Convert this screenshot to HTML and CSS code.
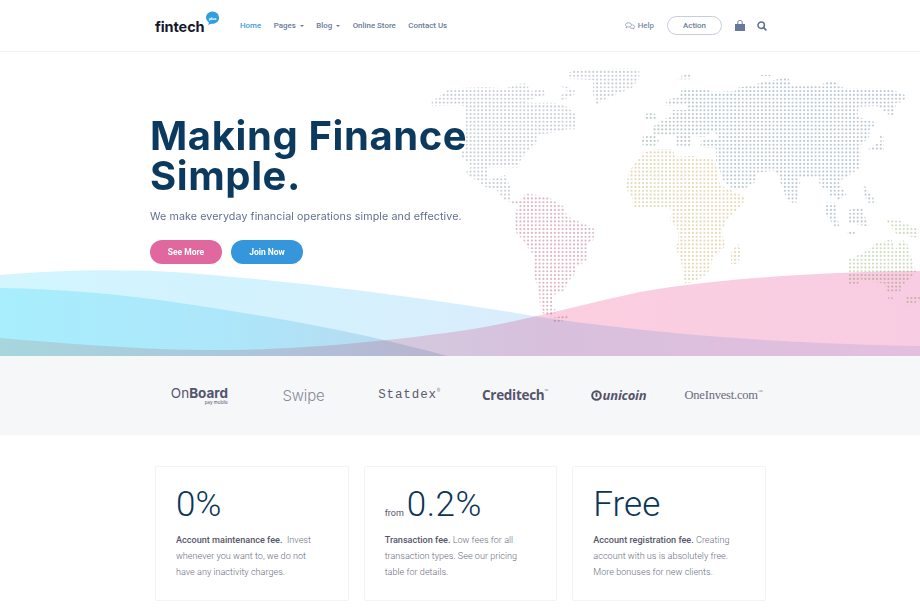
FILE: index.html
```html
<!DOCTYPE html>
<html lang="en">
<head>
<meta charset="utf-8">
<title>Fintech</title>
<link rel="stylesheet" href="styles.css">
</head>
<body>
<header class="header">
  <a class="logo">fintech<svg class="logo-bubble" width="15" height="14" viewBox="0 0 15 14"><path d="M7.5 0.5a6.6 6.2 0 0 1 6.6 6.2c0 3.4-3 6-6.6 6-1.2 0-2.6 .6-4.4 1.1 .6-1 .8-1.800 .6-2.500A6 6 0 0 1 .9 6.700 6.600 6.200 0 0 1 7.500 .5z" fill="#2f9fe0"/><text x="7.500" y="8.500" class="logo-bubble-text">plus</text></svg></a>
  <nav class="nav">
    <a class="nav-link is-active">Home</a>
    <a class="nav-link has-caret">Pages</a>
    <a class="nav-link has-caret">Blog</a>
    <a class="nav-link">Online Store</a>
    <a class="nav-link">Contact Us</a>
  </nav>
  <div class="tools">
    <a class="help"><svg width="10" height="8" viewBox="0 0 10 8"><path d="M3.500 .8c1.700 0 3 .9 3 2.100S5.200 5 3.500 5c-.4 0-.7 0-1-.1L1.200 5.600l.3-1.200C.9 4 .5 3.500 .5 2.900 .5 1.700 1.800 .8 3.500 .8z" fill="none" stroke="#8e9ab3" stroke-width=".9"/><path d="M7.400 2.800c1.200.2 2.100.9 2.100 1.800 0 .5-.3 1-.8 1.300l.2 1-1.100-.6c-1 .2-2.300-.1-2.900-.9" fill="none" stroke="#8e9ab3" stroke-width=".9"/></svg>Help</a>
    <a class="action">Action</a>
    <svg class="bag" width="10" height="11" viewBox="0 0 10 11"><path d="M0 4h10v7H0z" fill="#67789c"/><path d="M2.800 4.500V2.400C2.800 1.100 3.800.4 5 .4s2.200.7 2.200 2v2.100" fill="none" stroke="#67789c" stroke-width="1"/></svg>
    <svg class="search" width="10" height="10" viewBox="0 0 10 10"><circle cx="4.200" cy="4.200" r="3.200" fill="none" stroke="#5d6f94" stroke-width="1.500"/><path d="M6.600 6.600 9.400 9.400" stroke="#5d6f94" stroke-width="1.600"/></svg>
  </div>
</header>

<section class="hero">
  <svg class="hero-art" width="920" height="304" viewBox="0 52 920 304" aria-hidden="true">
    <defs>
      <g id="dot-row" fill="#fff">
        <circle cx="1.920" cy="0" r="1.100"/><circle cx="5.750" cy="0" r="1.100"/><circle cx="9.580" cy="0" r="1.100"/><circle cx="13.420" cy="0" r="1.100"/><circle cx="17.250" cy="0" r="1.100"/><circle cx="21.080" cy="0" r="1.100"/>
      </g>
      <pattern id="dot" width="23" height="23" x="1" y="1" patternUnits="userSpaceOnUse">
        <use href="#dot-row" y="1.920"/><use href="#dot-row" y="5.750"/><use href="#dot-row" y="9.580"/><use href="#dot-row" y="13.420"/><use href="#dot-row" y="17.250"/><use href="#dot-row" y="21.080"/>
      </pattern>
      <mask id="dots" maskUnits="userSpaceOnUse" x="0" y="52" width="920" height="304"><rect x="0" y="52" width="920" height="304" fill="url(#dot)"/></mask>
      <linearGradient id="asia" gradientUnits="userSpaceOnUse" x1="60" y1="0" x2="500" y2="0"><stop offset="0" stop-color="#bccdc9"/><stop offset="1" stop-color="#bccad8"/></linearGradient>
      <linearGradient id="w1" gradientUnits="userSpaceOnUse" x1="0" y1="0" x2="920" y2="0"><stop offset="0" stop-color="#d3f5fe"/><stop offset=".25" stop-color="#d2f3fe"/><stop offset=".55" stop-color="#daedfd"/><stop offset="1" stop-color="#eaeefa"/></linearGradient>
      <linearGradient id="w2" gradientUnits="userSpaceOnUse" x1="0" y1="0" x2="460" y2="0"><stop offset="0" stop-color="#a8eefd"/><stop offset=".5" stop-color="#ade6fa"/><stop offset="1" stop-color="#bdd6ec"/></linearGradient>
      <linearGradient id="w3" gradientUnits="userSpaceOnUse" x1="0" y1="0" x2="920" y2="0"><stop offset="0" stop-color="#fee6df"/><stop offset=".4" stop-color="#fcd8e0"/><stop offset=".6" stop-color="#fbcfdf"/><stop offset="1" stop-color="#f8cde3"/></linearGradient>
    </defs>
    <g mask="url(#dots)">
      <g transform="translate(430 60) scale(.3333)" fill="#ccd0d8">
        <polygon points="5,125 60,85 160,82 230,85 260,72 290,70 300,95 340,85 345,105 310,115 285,128 360,128 372,128 412,140 437,165 437,208 410,208 385,216 320,225 320,250 295,272 272,300 265,322 175,322 175,360 225,345 245,390 190,390 160,378 130,355 105,340 125,318 88,285 108,260 108,140 85,135 5,138"/>
        <polygon points="380,72 435,88 432,105 395,122 390,105 415,100 405,85"/>
        <polygon points="415,40 440,26 490,28 560,26 628,26 628,55 605,85 560,102 512,125 497,138 488,95 490,60 415,56"/>
      </g>
      <polygon points="490,181 503,183 510,190 510,202 504,200" fill="#ccd0d8"/>
      <g transform="translate(500 180) scale(.3333)" fill="#dfb6c3">
        <polygon points="78,40 145,52 190,78 202,110 238,125 282,145 282,178 262,190 260,242 228,260 228,278 208,300 192,332 158,345 158,380 168,392 154,410 124,398 114,322 100,282 100,225 70,182 44,152 44,100 60,72 34,72 36,62 60,60"/>
        <polygon points="155,415 205,402 205,412 182,425 158,425"/>
      </g>
      <polygon points="640,157 643,153 655,149 673,149 675,157 692,156 715,160 720,185 735,192 746,198 740,208 733,213 727,220 722,230 725,247 713,257 710,270 702,278 685,284 682,268 680,257 675,248 678,243 678,230 670,220 672,210 663,207 633,207 632,197 625,187 630,170" fill="#e4d9ba"/>
      <polygon points="738,243 741,252 738,264 731,264 731,253" fill="#e4d9ba"/>
      <g transform="translate(620 60) scale(.3333)" fill="url(#asia)">
        <polygon points="138,120 180,110 185,84 262,84 275,96 345,94 350,84 400,74 440,64 505,52 512,74 600,74 640,60 670,84 800,84 838,98 862,108 848,127 800,132 828,135 818,172 790,152 770,138 716,140 712,170 772,188 748,210 748,232 722,255 722,322 682,350 640,372 662,402 632,412 616,372 590,350 540,352 518,400 522,422 495,392 480,352 460,332 410,338 408,365 372,388 340,388 310,362 288,302 288,265 240,262 245,240 300,240 282,212 250,232 180,222 140,228 100,225 98,200 130,178 150,172 155,150 200,150 200,132 140,138"/>
        <polygon points="172,58 195,40 215,40 215,58"/>
        <polygon points="422,40 452,40 452,48 422,48"/>
        <polygon points="72,225 98,222 118,240 100,262 60,252"/>
        <polygon points="72,165 95,155 112,168 112,182 72,182"/>
        <polygon points="170,228 215,228 215,262 170,262"/>
        <polygon points="775,222 792,222 792,272 762,272 740,272 785,240"/>
      </g>
      <g transform="translate(500 180) scale(.3333)" fill="#bccad8">
        <polygon points="838,0 902,0 888,72 862,62"/>
        <polygon points="950,0 1012,0 1040,45 1010,62 1000,30 975,30"/>
        <polygon points="975,68 1005,68 1018,140 1005,140 975,100"/>
        <polygon points="1046,90 1085,82 1106,140 1046,128"/>
        <polygon points="1088,8 1130,68 1102,68 1088,30"/>
        <polygon points="1042,152 1064,152 1064,162 1042,162"/>
      </g>
      <g transform="translate(500 180) scale(.3333)" fill="#cedcbe">
        <polygon points="1044,240 1105,210 1125,190 1175,178 1185,210 1205,178 1222,190 1236,240 1248,275 1230,298 1202,322 1202,335 1158,335 1155,312 1140,308 1080,298 1075,312 1044,312"/>
        <polygon points="1158,120 1200,122 1255,148 1255,175 1190,162"/>
        <polygon points="1165,345 1178,345 1178,358 1165,358"/>
        <polygon points="1215,350 1260,345 1260,362 1232,375 1215,375"/>
      </g>
    </g>
    <path class="wave wave-1" d="M0 275C60 270 130 268 200 274 320 284 440 300 540 317 640 332 780 344 920 346V356H0Z"/>
    <path class="wave wave-2" d="M0 288C60 289 120 294 180 303 280 318 360 332 447 356H0Z"/>
    <path class="wave wave-3" d="M0 338C60 343 130 349 200 350 290 351 380 342 460 331 520 322 580 305 640 292 720 278 820 272 920 271V356H0Z"/>
  </svg>
  <div class="hero-copy">
    <h1 class="hero-title">Making Finance<br>Simple.</h1>
    <p class="hero-sub">We make everyday financial operations simple and effective.</p>
    <div class="hero-actions">
      <a class="btn btn-pink">See More</a>
      <a class="btn btn-blue">Join Now</a>
    </div>
  </div>
</section>

<section class="partners">
  <div class="partner-grid">
    <div class="brand brand-onboard"><span class="ob-main">On<b>Board</b></span><span class="ob-sub">pay mobile</span></div>
    <div class="brand brand-swipe">Swipe</div>
    <div class="brand brand-statdex">Statdex<sup>®</sup></div>
    <div class="brand brand-creditech">Creditech<sup>™</sup></div>
    <div class="brand brand-unicoin"><svg width="11" height="11" viewBox="0 0 11 11"><circle cx="5.500" cy="5.500" r="4.300" fill="none" stroke="#4f4f66" stroke-width="2"/><path d="M5.500 2.800v4" stroke="#4f4f66" stroke-width="1.800"/></svg>unicoin</div>
    <div class="brand brand-oneinvest">OneInvest.com<sup>™</sup></div>
  </div>
</section>

<section class="features">
  <article class="card">
    <h2 class="card-figure">0%</h2>
    <p class="card-text"><strong>Account maintenance fee.</strong>&nbsp; Invest whenever you want to, we do not have any inactivity charges.</p>
  </article>
  <article class="card">
    <h2 class="card-figure"><small>from</small><span class="figure-wide">0.2%</span></h2>
    <p class="card-text"><strong>Transaction fee.</strong> Low fees for all transaction types. See our pricing table for details.</p>
  </article>
  <article class="card">
    <h2 class="card-figure">Free</h2>
    <p class="card-text"><strong>Account registration fee.</strong> Creating account with us is absolutely free. More bonuses for new clients.</p>
  </article>
</section>
</body>
</html>
```
FILE: styles.css
```css
* { box-sizing: border-box; }
html, body { margin: 0; padding: 0; height: 613px; overflow: hidden; background: #fff; }
body { font-family: Roboto, "Liberation Sans", sans-serif; color: #6f7488; }
a { text-decoration: none; color: inherit; }

.header { display: flex; align-items: center; height: 52px; padding: 0 153px 0 155px; border-bottom: 1px solid #f0f1f3; }
.logo { position: relative; display: block; width: 85px; font: 700 14.500px/1 Inter, sans-serif; color: #14182c; letter-spacing: -.1px; padding-top: 3px; }
.logo-bubble { position: absolute; left: 50px; top: -6px; }
.logo-bubble-text { font: 700 4px Roboto, sans-serif; fill: #fff; text-anchor: middle; }
.nav { display: flex; align-items: center; gap: 12.500px; font-size: 7.900px; font-weight: 500; color: #69789a; }
.nav-link.is-active { color: #3d9ad8; }
.nav-link.has-caret { display: flex; align-items: center; gap: 4px; }
.nav-link.has-caret::after { content: ""; border: 2.500px solid transparent; border-top-color: #69789a; border-bottom: 0; }
.tools { display: flex; align-items: center; margin-left: auto; font-size: 7.900px; font-weight: 500; color: #7a88a6; }
.help { display: flex; align-items: center; gap: 3px; margin-right: 13px; }
.action { display: flex; align-items: center; justify-content: center; width: 55px; height: 19px; border: 1px solid #c9cdd9; border-radius: 10px; margin-right: 13px; color: #6c7a99; }
.bag { margin-right: 12px; }

.hero { position: relative; height: 304px; overflow: hidden; }
.hero-art { position: absolute; inset: 0; display: block; }
.wave { mix-blend-mode: multiply; }
.wave-1 { fill: url(#w1); }
.wave-2 { fill: url(#w2); mix-blend-mode: normal; }
.wave-3 { fill: url(#w3); }
.hero-copy { position: relative; padding: 64px 0 0 150px; }
.hero-title { margin: 0; font: 700 40px/40px Inter, sans-serif; color: #0c3a5e; letter-spacing: .6px; }
.hero-sub { margin: 13px 0 0; font: 400 10.700px/16px Inter, sans-serif; color: #62708f; letter-spacing: .1px; }
.hero-actions { display: flex; gap: 9px; margin-top: 15px; }
.btn { display: flex; align-items: center; justify-content: center; width: 72px; height: 24px; border-radius: 12px; font-size: 8.500px; font-weight: 700; color: #fff; }
.btn-pink { background: #e0689e; }
.btn-blue { background: #3596dc; }

.partners { height: 79px; background: #f6f7f9; display: flex; align-items: center; justify-content: center; }
.partner-grid { display: grid; grid-template-columns: repeat(6, 105px); padding-left: 2px; }
.brand { display: flex; align-items: center; justify-content: center; color: #54546c; white-space: nowrap; }
.brand sup { font-size: 5px; line-height: 1; align-self: flex-start; margin-top: 2px; font-weight: 400; opacity: .8; }
.brand-onboard { flex-direction: column; align-items: flex-end; padding-right: 23px; font-family: Inter, sans-serif; line-height: 1; }
.ob-main { font-size: 13.500px; letter-spacing: 0; line-height: 13px; }
.ob-sub { font-size: 4.500px; line-height: 5px; }
.brand-swipe { font: 300 15px/1 Inter, sans-serif; color: #8a8a99; letter-spacing: -.2px; }
.brand-statdex { padding-left: 2px; font: 400 12.500px/1 "Liberation Mono", monospace; color: #5a5a6e; letter-spacing: .9px; }
.brand-creditech { padding-left: 3px; font: 700 13.500px/1 "Open Sans", sans-serif; letter-spacing: -.3px; }
.brand-unicoin { gap: 1px; font: italic 700 13px/1 "Open Sans", sans-serif; letter-spacing: -.2px; }
.brand-oneinvest { font: 400 12.500px/1 "Liberation Serif", serif; color: #6a6a7c; letter-spacing: -.2px; }

.features { display: grid; grid-template-columns: repeat(3, 1fr); gap: 15px; width: 611px; margin: 31px 0 0 155px; }
.card { height: 135px; padding: 18px 30px 0 20px; border: 1px solid #f2f3f5; border-radius: 2px; }
.card-figure { display: flex; align-items: baseline; gap: 3px; margin: 0; font-size: 35px; line-height: 40px; font-weight: 300; color: #0a3558; }
.card-figure small { font-size: 9px; line-height: 1; font-weight: 400; color: #55556a; }
.figure-wide { letter-spacing: .5px; }
.card-text { margin: 7px 0 0; font-size: 9.100px; line-height: 16px; font-weight: 300; color: #6a6e80; }
.card-text strong { font-weight: 500; color: #55566a; }
```
